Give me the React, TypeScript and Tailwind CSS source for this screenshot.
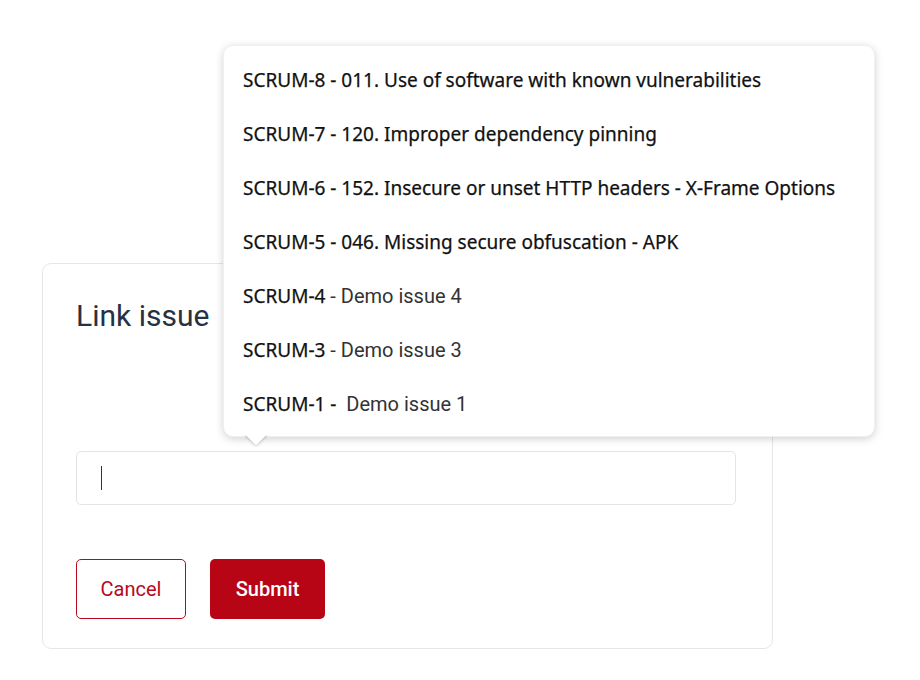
import React from "react";

const items: { a: string; b?: string }[] = [
  { a: "SCRUM-8 - 011. Use of software with known vulnerabilities" },
  { a: "SCRUM-7 - 120. Improper dependency pinning" },
  { a: "SCRUM-6 - 152. Insecure or unset HTTP headers - X-Frame Options" },
  { a: "SCRUM-5 - 046. Missing secure obfuscation - APK" },
  { a: "SCRUM-4 ", b: "- Demo issue 4" },
  { a: "SCRUM-3 ", b: "- Demo issue 3" },
  { a: "SCRUM-1 - ", b: "\u00a0Demo issue 1" },
];

export default function App() {
  return (
    <div className="relative w-[920px] h-[680px] bg-white overflow-hidden" style={{ fontFamily: "Roboto, sans-serif" }}>
      <div className="absolute left-[42px] top-[263px] w-[731px] h-[386px] rounded-[9px] border border-[#e6e6e6] bg-white px-[33px] pt-[34px]">
        <h2 className="text-[30px] leading-[36px] text-[#283142] font-normal">Link issue</h2>
        <div className="mt-[117px] h-[54px] w-[660px] rounded-[5px] border border-[#e4e4e4] flex items-center pl-[24px]">
          <div className="w-px h-[24px] bg-[#333]" />
        </div>
        <div className="mt-[54px] flex gap-[24px]">
          <button className="w-[110px] h-[60px] rounded-[5px] border border-[#b8081c] text-[#b8081c] text-[20px] bg-white">
            Cancel
          </button>
          <button className="w-[115px] h-[60px] rounded-[5px] bg-[#b80516] text-white text-[20px] font-medium">
            Submit
          </button>
        </div>
      </div>

      <div className="absolute left-[223px] top-[45px] w-[652px] h-[392px] rounded-[10px] bg-white border border-[#f0f0f0] shadow-[0_2px_8px_rgba(0,0,0,0.18)] pt-[7px]">
        {items.map((it, i) => (
          <div key={i} className="h-[54px] flex items-center pl-[19px] whitespace-pre">
            <span className="text-[#111] text-[19px] font-normal [-webkit-text-stroke:0.25px_#111]" style={{ fontFamily: '"Noto Sans", sans-serif' }}>{it.a}</span>
            {it.b && (
              <span className="text-[#333] text-[20px]" style={{ fontFamily: "Roboto, sans-serif" }}>{it.b}</span>
            )}
          </div>
        ))}
        <div className="absolute left-[20px] bottom-[-11px] w-[24px] h-[12px] overflow-hidden">
          <div className="absolute left-[4px] top-[-9px] w-[16px] h-[16px] rotate-45 bg-white shadow-[1px_1px_3px_rgba(0,0,0,0.18)]" />
        </div>
      </div>
    </div>
  );
}
